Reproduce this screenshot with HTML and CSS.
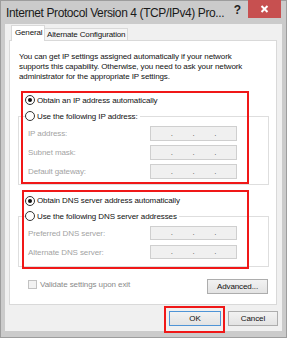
FILE: index.html
```html
<!DOCTYPE html>
<html lang="en">
<head>
  <meta charset="UTF-8" />
  <title>Internet Protocol Version 4 (TCP/IPv4) Properties</title>
  <link rel="stylesheet" href="styles.css">
</head>
<body>
  <div class="window">
    <div class="titlebar">
      <span class="title">Internet Protocol Version 4 (TCP/IPv4) Pro...</span>
      <span class="help">?</span>
      <span class="close">
        <svg width="33" height="18" viewBox="0 0 33 18">
          <path d="M13.5 6 L19.5 12 M19.5 6 L13.5 12" stroke="#fff" stroke-width="2" fill="none" />
        </svg>
      </span>
    </div>

    <div class="client">
      <div class="tabs">
        <div class="tab active">General</div>
        <div class="tab">Alternate Configuration</div>
      </div>

      <div class="panel">
        <p class="intro">You can get IP settings assigned automatically if your network<br>supports this capability. Otherwise, you need to ask your network<br>administrator for the appropriate IP settings.</p>

        <!-- IP address -->
        <div class="section ip-section">
          <div class="radio checked"><span class="dot"></span>Obtain an IP address automatically</div>
          <fieldset class="group">
            <legend class="radio"><span class="dot"></span>Use the following IP address:</legend>
            <div class="field"><span class="label">IP address:</span><span class="ipbox"><i>.</i><i>.</i><i>.</i></span></div>
            <div class="field"><span class="label">Subnet mask:</span><span class="ipbox"><i>.</i><i>.</i><i>.</i></span></div>
            <div class="field"><span class="label">Default gateway:</span><span class="ipbox"><i>.</i><i>.</i><i>.</i></span></div>
          </fieldset>
        </div>

        <!-- DNS -->
        <div class="section dns-section">
          <div class="radio checked"><span class="dot"></span>Obtain DNS server address automatically</div>
          <fieldset class="group">
            <legend class="radio"><span class="dot"></span>Use the following DNS server addresses</legend>
            <div class="field"><span class="label">Preferred DNS server:</span><span class="ipbox"><i>.</i><i>.</i><i>.</i></span></div>
            <div class="field"><span class="label">Alternate DNS server:</span><span class="ipbox"><i>.</i><i>.</i><i>.</i></span></div>
          </fieldset>
        </div>

        <div class="panel-footer">
          <div class="check"><span class="box"></span>Validate settings upon exit</div>
          <button class="btn advanced">Advanced...</button>
        </div>
      </div>

      <div class="buttons">
        <button class="btn default">OK</button>
        <button class="btn cancel">Cancel</button>
      </div>
    </div>

    <!-- highlight marks -->
    <div class="mark mark-ip"></div>
    <div class="mark mark-dns"></div>
    <div class="mark mark-ok"></div>
  </div>
</body>
</html>
```

FILE: styles.css
```css
body {
  margin: 0;
  font-family: "Liberation Sans", Arial, sans-serif;
  font-size: 8px;
  letter-spacing: -0.1px;
  color: #111;
}
.window {
  position: relative;
  width: 287px;
  height: 338px;
  box-sizing: border-box;
  background: #cbcbcb;
  border: 1px solid #9d9d9d;
  padding: 0 4px 6px 4px;
  display: flex;
  flex-direction: column;
}
.titlebar {
  height: 23px;
  display: flex;
  align-items: center;
}
.title {
  margin-left: 1px;
  font-size: 12px;
  letter-spacing: -0.4px;
  color: #1a1a1a;
  flex: 1;
  white-space: nowrap;
}
.help {
  align-self: flex-start;
  margin-top: 2px;
  margin-right: 7px;
  font-size: 12px;
  font-weight: bold;
  color: #222;
}
.close {
  align-self: flex-start;
  width: 33px;
  height: 18px;
  margin-top: -1px;
  margin-right: 1px;
  background: #c75050;
}
.close svg {
  display: block;
}
.client {
  flex: 1;
  background: #f0f0f0;
  padding: 1px 5px 0 4px;
  display: flex;
  flex-direction: column;
}
.tabs {
  display: flex;
  align-items: flex-end;
  height: 16px;
  margin-left: 2px;
  margin-bottom: -1px;
}
.tab {
  box-sizing: border-box;
  height: 13px;
  line-height: 11px;
  padding: 0 2px;
  border: 1px solid #d9d9d9;
  border-left: none;
  background: #f5f5f5;
  width: 83px;
  white-space: nowrap;
  overflow: hidden;
  letter-spacing: -0.15px;
}
.tab.active {
  position: relative;
  z-index: 1;
  width: 34px;
  height: 16px;
  line-height: 14px;
  padding: 0 3px;
  border-left: 1px solid #d9d9d9;
  border-bottom: none;
  background: #fff;
}
.panel {
  background: #fff;
  border: 1px solid #d9d9d9;
  padding: 11px 7px 10px 8px;
}
.intro {
  margin: 0 0 0 1px;
  line-height: 10px;
}
.section {
  margin-top: 10px;
}
.dns-section {
  margin-top: 8px;
}
.radio {
  display: flex;
  align-items: center;
  height: 16px;
  padding-left: 7px;
}
.dns-section > .radio {
  height: 15px;
}
.dot {
  box-sizing: border-box;
  width: 10px;
  height: 10px;
  margin-right: 2px;
  border: 1px solid #333;
  border-radius: 50%;
  background: #fff;
  display: flex;
  align-items: center;
  justify-content: center;
}
.checked .dot::after {
  content: "";
  width: 4px;
  height: 4px;
  border-radius: 50%;
  background: #111;
}
.group {
  margin: 0;
  padding: 0 0 5px 0;
  border: 1px solid #dedede;
}
.dns-section .group {
  padding-bottom: 7px;
}
.group legend {
  margin-left: 6px;
  padding: 0 2px 0 0;
}
.group legend.radio {
  padding-left: 0;
}
.field {
  display: flex;
  align-items: center;
  height: 15px;
  margin-top: 4px;
  padding-left: 9px;
  color: #a3a3a3;
}
.dns-section .field {
  height: 14px;
  margin-top: 5px;
}
.field:first-of-type {
  margin-top: 2px;
}
.label {
  width: 122px;
}
.ipbox {
  box-sizing: border-box;
  width: 87px;
  height: 100%;
  border: 1px solid #cfcfcf;
  background: #f0f0f0;
  display: flex;
  justify-content: space-evenly;
  align-items: center;
  color: #555;
}
.ipbox i {
  font-style: normal;
  line-height: 8px;
}
.panel-footer {
  display: flex;
  justify-content: space-between;
  align-items: flex-start;
  margin-top: 12px;
  height: 15px;
}
.check {
  display: flex;
  align-items: center;
  padding-left: 10px;
  height: 10px;
  color: #8a8a8a;
}
.box {
  box-sizing: border-box;
  width: 9px;
  height: 9px;
  margin-right: 3px;
  border: 1px solid #c2c2c2;
  background: #f2f2f2;
}
.btn {
  box-sizing: border-box;
  height: 15px;
  padding: 0;
  border: 1px solid #adadad;
  background: linear-gradient(#f2f2f2, #e3e3e3);
  font-family: inherit;
  font-size: 8px;
  letter-spacing: -0.1px;
  color: #111;
}
.advanced {
  width: 61px;
  margin-right: 1px;
}
.buttons {
  display: flex;
  justify-content: flex-end;
  gap: 7px;
  margin-top: 6px;
  margin-right: -1px;
}
.default {
  width: 52px;
  border-color: #4f94d6;
}
.cancel {
  width: 50px;
}
.mark {
  position: absolute;
  box-sizing: border-box;
  border: 2px solid #f01818;
}
.mark-ip {
  left: 20px;
  top: 90px;
  width: 228px;
  height: 93px;
}
.mark-dns {
  left: 21px;
  top: 189px;
  width: 227px;
  height: 79px;
}
.mark-ok {
  left: 163px;
  top: 305px;
  width: 61px;
  height: 27px;
}
```
